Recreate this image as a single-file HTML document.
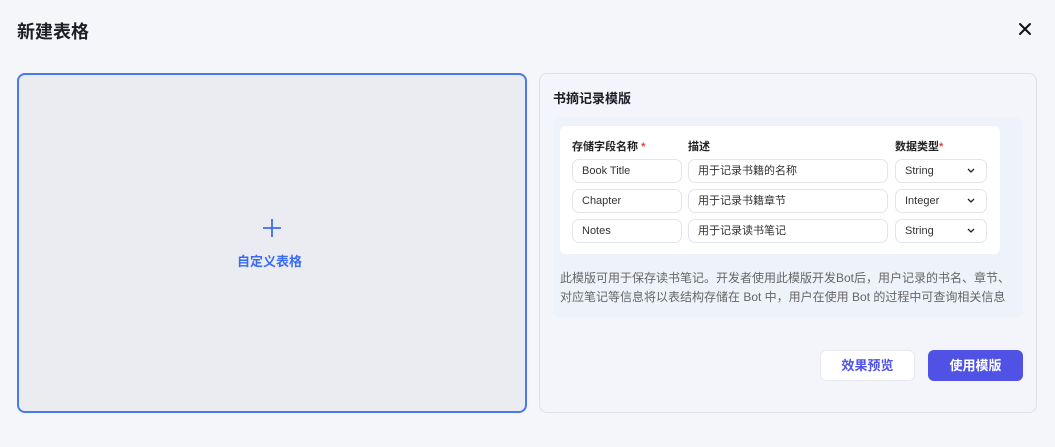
<!DOCTYPE html>
<html><head><meta charset="utf-8"><style>
*{margin:0;padding:0;box-sizing:border-box}
body{width:1055px;height:447px;background:#f5f6fa;font-family:"Liberation Sans","Noto Sans CJK SC",sans-serif;position:relative;overflow:hidden;color:#1d1f27}
.a{position:absolute}
.inp{position:absolute;height:24px;border:1px solid #e3e5ea;border-radius:7px;background:#fff;font-size:11px;line-height:22px;padding-left:9px;color:#333}
.h{position:absolute;top:138px;font-size:11px;font-weight:bold;color:#222}
.h i{color:#e3453a;font-style:normal}
</style></head><body>
<div class="a" style="left:17px;top:18px;font-size:18px;font-weight:bold;">新建表格</div>
<svg class="a" style="left:1018px;top:22px" width="14" height="14" viewBox="0 0 14 14"><path d="M2 2L12 12M12 2L2 12" stroke="#111" stroke-width="2" stroke-linecap="round"/></svg>
<div class="a" style="left:17px;top:73px;width:510px;height:340px;border:2px solid #4a78ee;border-radius:8px;background:#ebecf1"></div>
<svg class="a" style="left:262px;top:218px" width="20" height="20" viewBox="0 0 20 20"><path d="M10 1V19M1 10H19" stroke="#3a6cf0" stroke-width="1.8"/></svg>
<div class="a" style="left:237px;top:251px;font-size:13px;font-weight:bold;color:#3a6cf0">自定义表格</div>
<div class="a" style="left:539px;top:73px;width:498px;height:340px;border:1px solid #dfe0e6;border-radius:8px;background:#f4f5fa"></div>
<div class="a" style="left:553px;top:88px;font-size:13px;font-weight:bold">书摘记录模版</div>
<div class="a" style="left:553px;top:118px;width:470px;height:200px;background:#eef2fb;border-radius:8px"></div>
<div class="a" style="left:560px;top:126px;width:440px;height:128px;background:#fff;border-radius:6px"></div>
<div class="h" style="left:572px">存储字段名称 <i>*</i></div>
<div class="h" style="left:688px">描述</div>
<div class="h" style="left:895px">数据类型<i>*</i></div>
<div class="inp" style="left:572px;top:159px;width:110px">Book Title</div>
<div class="inp" style="left:688px;top:159px;width:200px">用于记录书籍的名称</div>
<div class="inp" style="left:895px;top:159px;width:92px">String</div>
<div class="inp" style="left:572px;top:189px;width:110px">Chapter</div>
<div class="inp" style="left:688px;top:189px;width:200px">用于记录书籍章节</div>
<div class="inp" style="left:895px;top:189px;width:92px">Integer</div>
<div class="inp" style="left:572px;top:219px;width:110px">Notes</div>
<div class="inp" style="left:688px;top:219px;width:200px">用于记录读书笔记</div>
<div class="inp" style="left:895px;top:219px;width:92px">String</div>
<svg class="a" style="left:966px;top:167px" width="10" height="70" viewBox="0 0 10 70"><path d="M2 2L5 5L8 2M2 32L5 35L8 32M2 62L5 65L8 62" stroke="#222" stroke-width="1.3" fill="none"/></svg>
<div class="a" style="left:560px;top:269px;width:460px;font-size:12px;line-height:19px;color:#666">此模版可用于保存读书笔记。开发者使用此模版开发Bot后，用户记录的书名、章节、对应笔记等信息将以表结构存储在 Bot 中，用户在使用 Bot 的过程中可查询相关信息</div>
<div class="a" style="left:820px;top:350px;width:95px;height:31px;background:#fff;border:1px solid #e8e9ee;border-radius:6px;color:#4f52e5;font-size:13px;font-weight:bold;text-align:center;line-height:29px">效果预览</div>
<div class="a" style="left:928px;top:350px;width:95px;height:31px;background:#4f52e5;border-radius:6px;color:#fff;font-size:13px;font-weight:bold;text-align:center;line-height:31px">使用模版</div>
</body></html>
